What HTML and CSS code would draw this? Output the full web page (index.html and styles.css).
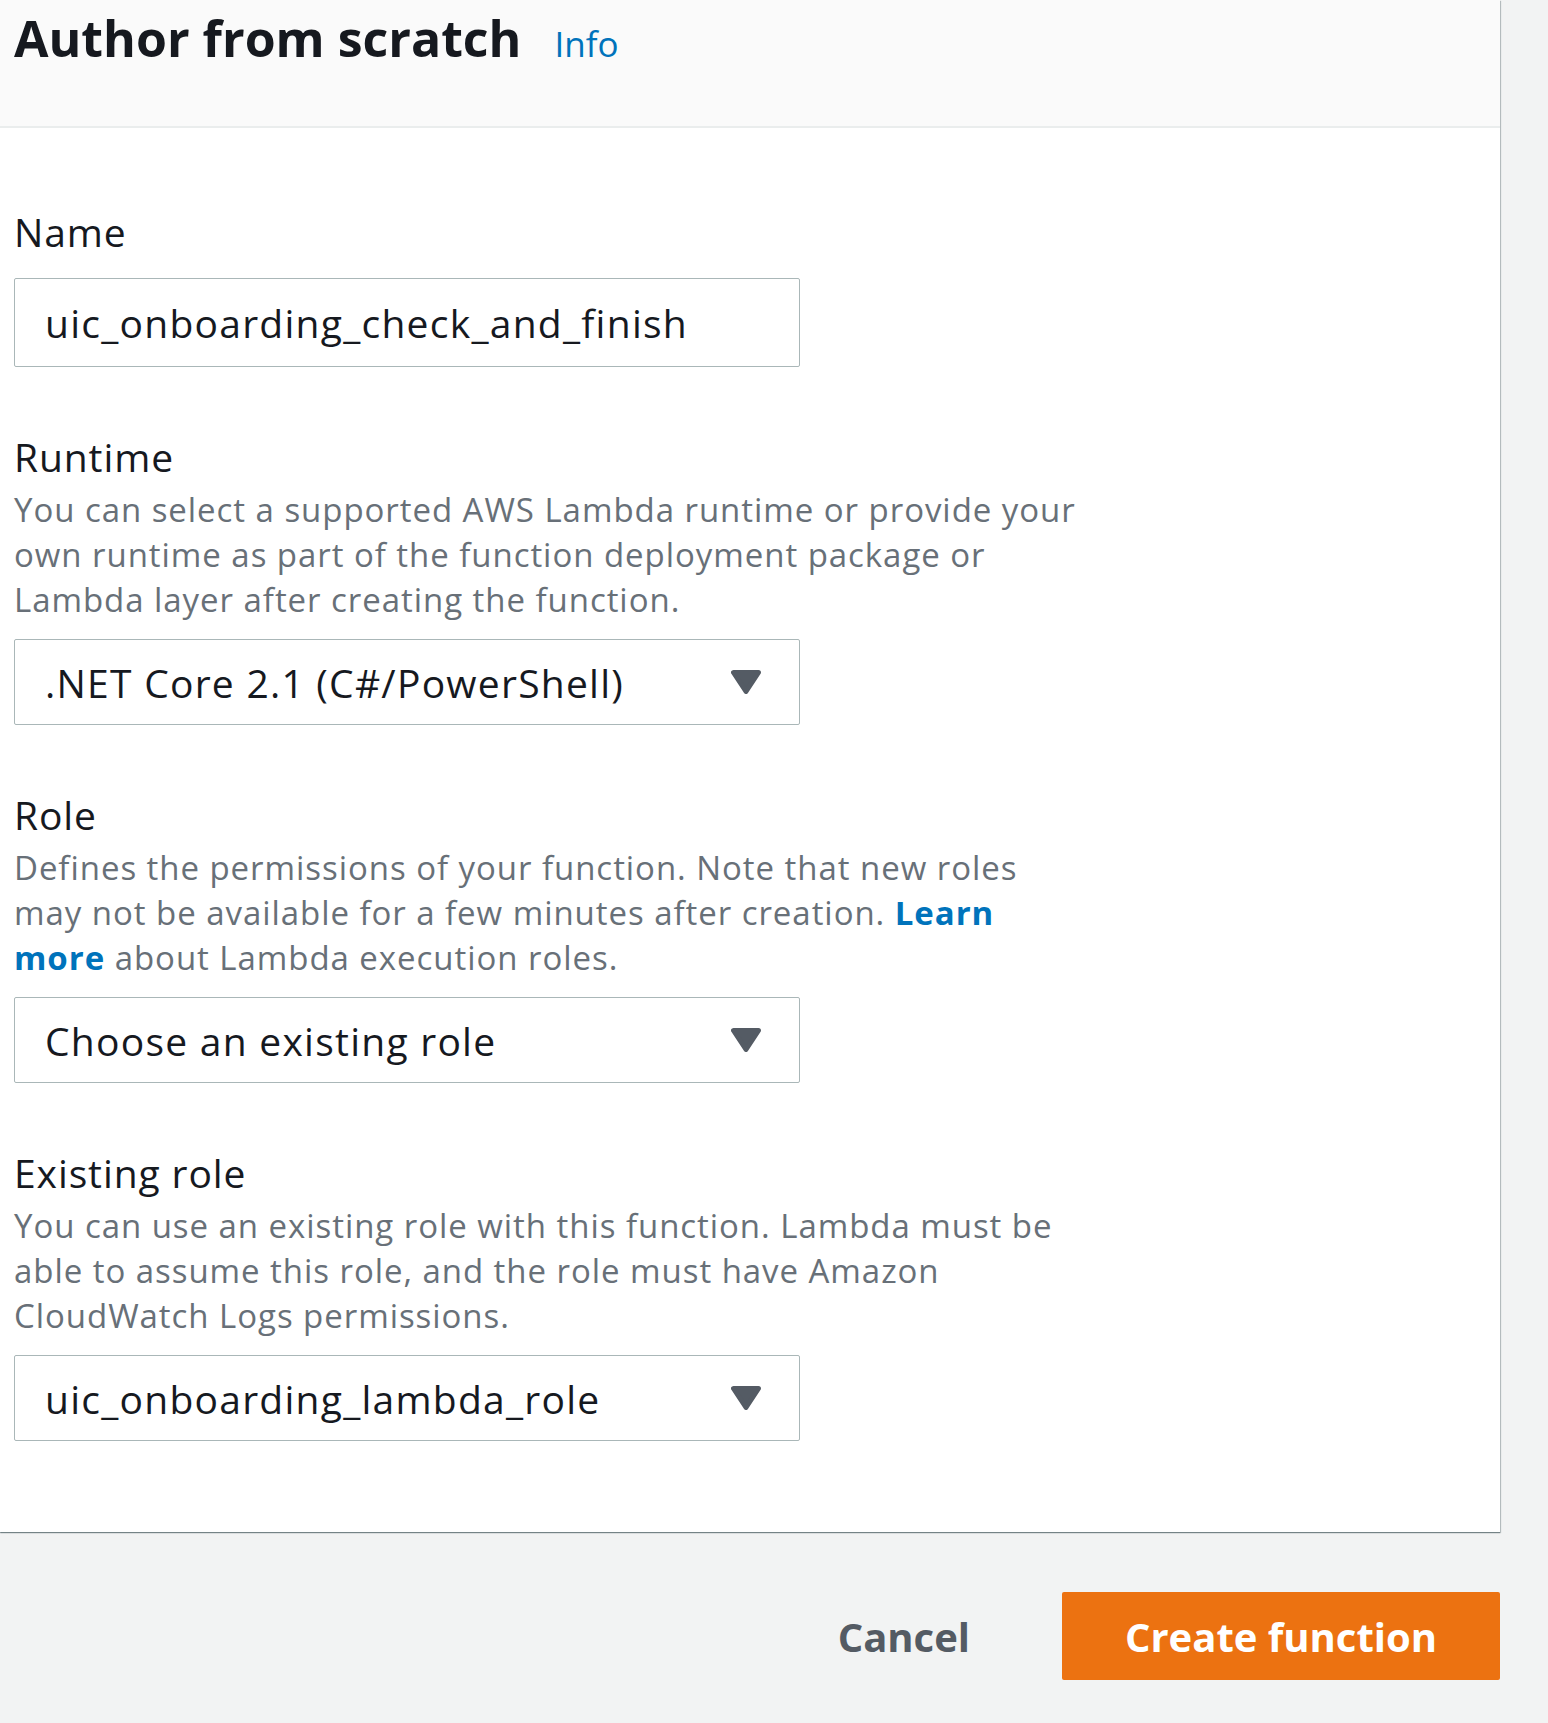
FILE: index.html
```html
<!DOCTYPE html>
<html lang="en">
<head>
<meta charset="utf-8">
<title>Author from scratch</title>
<link rel="stylesheet" href="styles.css">
</head>
<body>
<div class="page">
  <section class="card">
    <header class="card-header">
      <h2 class="title">Author from scratch</h2>
      <a class="info" href="#">Info</a>
    </header>
    <div class="card-body">
      <div class="field field-first">
        <label class="label">Name</label>
        <div class="input input-text">uic_onboarding_check_and_finish</div>
      </div>
      <div class="field">
        <label class="label">Runtime</label>
        <p class="desc">You can select a supported AWS Lambda runtime or provide your<br>own runtime as part of the function deployment package or<br>Lambda layer after creating the function.</p>
        <div class="input select">
          <span class="value">.NET Core 2.1 (C#/PowerShell)</span>
          <svg class="caret" width="30" height="24" viewBox="0 0 30 24"><polygon points="2.5,2.5 27.5,2.5 15,21.5" fill="#545b64" stroke="#545b64" stroke-width="5" stroke-linejoin="round"/></svg>
        </div>
      </div>
      <div class="field">
        <label class="label">Role</label>
        <p class="desc">Defines the permissions of your function. Note that new roles<br>may not be available for a few minutes after creation. <a class="link" href="#">Learn<br>more</a> about Lambda execution roles.</p>
        <div class="input select">
          <span class="value">Choose an existing role</span>
          <svg class="caret" width="30" height="24" viewBox="0 0 30 24"><polygon points="2.5,2.5 27.5,2.5 15,21.5" fill="#545b64" stroke="#545b64" stroke-width="5" stroke-linejoin="round"/></svg>
        </div>
      </div>
      <div class="field">
        <label class="label">Existing role</label>
        <p class="desc">You can use an existing role with this function. Lambda must be<br>able to assume this role, and the role must have Amazon<br>CloudWatch Logs permissions.</p>
        <div class="input select">
          <span class="value">uic_onboarding_lambda_role</span>
          <svg class="caret" width="30" height="24" viewBox="0 0 30 24"><polygon points="2.5,2.5 27.5,2.5 15,21.5" fill="#545b64" stroke="#545b64" stroke-width="5" stroke-linejoin="round"/></svg>
        </div>
      </div>
    </div>
  </section>
  <div class="actions">
    <button class="btn btn-cancel" type="button">Cancel</button>
    <button class="btn btn-primary" type="button">Create function</button>
  </div>
</div>
</body>
</html>
```
FILE: styles.css
```css
* { box-sizing: border-box; }
html, body {
  margin: 0;
  padding: 0;
  background: #f2f3f3;
  font-family: "Open Sans", "Noto Sans", Arial, sans-serif;
  color: #16191f;
}
.page {
  width: 1500px;
}
.card {
  background: #ffffff;
  box-shadow: 0 1px 1px 0 rgba(0, 28, 36, 0.4), 1px 1px 1px 0 rgba(0, 28, 36, 0.2);
}
.card-header {
  height: 128px;
  padding: 8px 0 0 14px;
  background: #fafafa;
  border-bottom: 2px solid #eaeded;
  display: flex;
  align-items: baseline;
  gap: 33px;
}
.title {
  margin: 0;
  font-size: 50px;
  line-height: 60px;
  font-weight: 700;
  color: #16191f;
}
.info {
  font-size: 35px;
  line-height: 60px;
  color: #0073bb;
  text-decoration: none;
}
.card-body {
  padding: 81px 0 91px 14px;
}
.field {
  margin-top: 67px;
  display: flex;
  flex-direction: column;
  align-items: flex-start;
}
.field-first {
  margin-top: 0;
}
.label {
  font-size: 39px;
  line-height: 46px;
  letter-spacing: 0.9px;
  color: #16191f;
}
.desc {
  margin: 7px 0 0;
  white-space: nowrap;
  font-size: 33px;
  line-height: 45px;
  letter-spacing: 0.95px;
  color: #687078;
}
.link {
  color: #0073bb;
  font-weight: 700;
  text-decoration: none;
}
.input {
  width: 786px;
  border: 1px solid #aab7b8;
  border-radius: 2px;
  background: #ffffff;
  padding: 0 38px 0 30px;
  font-size: 39px;
  letter-spacing: 1.25px;
  color: #16191f;
  display: flex;
  align-items: center;
  justify-content: space-between;
}
.input-text {
  margin-top: 23px;
  height: 89px;
}
.select {
  margin-top: 17px;
  height: 86px;
}
.caret {
  display: block;
  flex: none;
}
.actions {
  margin-top: 60px;
  display: flex;
  justify-content: flex-end;
  align-items: center;
}
.btn {
  font-family: "Open Sans", "Noto Sans", Arial, sans-serif;
  font-weight: 700;
  font-size: 40px;
  border: none;
  cursor: pointer;
  height: 88px;
}
.btn-cancel {
  background: transparent;
  color: #545b64;
  padding: 0;
  margin-right: 92px;
}
.btn-primary {
  background: #ec7211;
  color: #ffffff;
  width: 438px;
  border-radius: 2px;
  padding: 0;
}
```
